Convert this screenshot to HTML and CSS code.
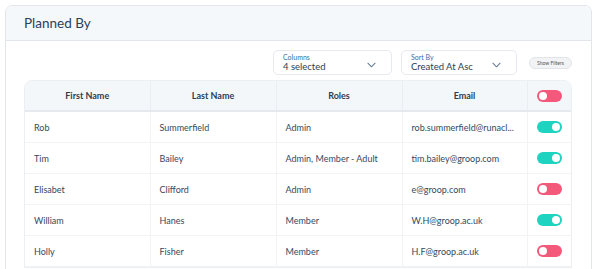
FILE: index.html
```html
<!DOCTYPE html>
<html lang="en">
<head>
    <meta charset="UTF-8">
    <meta name="viewport" content="width=device-width, initial-scale=1.0">
    <title>Planned By</title>
    <link rel="stylesheet" href="styles.css">
</head>
<body>
    <div class="card">
        <div class="card-header">
            <h2>Planned By</h2>
        </div>

        <div class="card-body">
            <div class="toolbar">
                <div class="dropdown dd-columns">
                    <span class="dd-label">Columns</span>
                    <span class="dd-value">4 selected</span>
                    <svg class="chevron" viewBox="0 0 10 6" width="9" height="6"><path d="M1 1l4 4 4-4" fill="none" stroke="#6a7f95" stroke-width="1.2" stroke-linecap="round" stroke-linejoin="round"/></svg>
                </div>
                <div class="dropdown dd-sort">
                    <span class="dd-label">Sort By</span>
                    <span class="dd-value">Created At Asc</span>
                    <svg class="chevron" viewBox="0 0 10 6" width="9" height="6"><path d="M1 1l4 4 4-4" fill="none" stroke="#6a7f95" stroke-width="1.2" stroke-linecap="round" stroke-linejoin="round"/></svg>
                </div>
                <button class="pill">Show Filters</button>
            </div>

            <div class="table-wrap">
                <table>
                    <colgroup>
                        <col class="w-first">
                        <col class="w-mid">
                        <col class="w-mid">
                        <col class="w-first">
                        <col>
                    </colgroup>
                    <thead>
                        <tr>
                            <th>First Name</th>
                            <th>Last Name</th>
                            <th>Roles</th>
                            <th>Email</th>
                            <th class="col-toggle"><span class="toggle off"></span></th>
                        </tr>
                    </thead>
                    <tbody>
                        <tr>
                            <td>Rob</td>
                            <td>Summerfield</td>
                            <td>Admin</td>
                            <td>rob.summerfield@runacl...</td>
                            <td class="cell-toggle"><span class="toggle on"></span></td>
                        </tr>
                        <tr>
                            <td>Tim</td>
                            <td>Bailey</td>
                            <td>Admin, Member - Adult</td>
                            <td>tim.bailey@groop.com</td>
                            <td class="cell-toggle"><span class="toggle on"></span></td>
                        </tr>
                        <tr>
                            <td>Elisabet</td>
                            <td>Clifford</td>
                            <td>Admin</td>
                            <td>e@groop.com</td>
                            <td class="cell-toggle"><span class="toggle off"></span></td>
                        </tr>
                        <tr>
                            <td>William</td>
                            <td>Hanes</td>
                            <td>Member</td>
                            <td>W.H@groop.ac.uk</td>
                            <td class="cell-toggle"><span class="toggle on"></span></td>
                        </tr>
                        <tr>
                            <td>Holly</td>
                            <td>Fisher</td>
                            <td>Member</td>
                            <td>H.F@groop.ac.uk</td>
                            <td class="cell-toggle"><span class="toggle off"></span></td>
                        </tr>
                    </tbody>
                </table>
            </div>
        </div>
    </div>
</body>
</html>
```

FILE: styles.css
```css
body {
    margin: 0;
    padding: 5px 8px 0 5px;
    font-family: Lato, "Open Sans", sans-serif;
    color: #2c3e50;
    background: #fff;
}
.card {
    width: 585px;
    border: 1px solid #e2e6eb;
    border-radius: 7px;
    height: 300px;
    overflow: hidden;
}
.card-header {
    height: 34px;
    background-color: #f5f8fb;
    border-bottom: 1px solid #e2e6eb;
    display: flex;
    align-items: center;
    padding-left: 18px;
}
.card-header h2 {
    margin: 0;
    font-size: 13.5px;
    font-weight: normal;
    color: #2a4158;
}
.card-body {
    padding: 9px 19px 0 18px;
}
.toolbar {
    display: flex;
    justify-content: flex-end;
    align-items: center;
    height: 25px;
    margin-bottom: 5px;
}
.dropdown {
    position: relative;
    box-sizing: border-box;
    height: 25px;
    border: 1px solid #e6e9ee;
    border-radius: 5px;
    padding: 2px 9px 0 9px;
    display: flex;
    flex-direction: column;
}
.dd-columns {
    width: 119px;
    margin-right: 9px;
}
.dd-sort {
    width: 116px;
    margin-right: 12px;
}
.dd-label {
    font-size: 7px;
    line-height: 8px;
    color: #3b6ea5;
}
.dd-value {
    font-size: 9.5px;
    line-height: 12px;
    color: #2c3e50;
}
.chevron {
    position: absolute;
    right: 15px;
    top: 11px;
}
.pill {
    width: 43px;
    height: 12px;
    padding: 0;
    border: 1px solid #e1e4e8;
    border-radius: 6px;
    background: #f2f3f5;
    font-family: Lato, sans-serif;
    font-size: 5px;
    color: #555;
}
.table-wrap {
    border: 1px solid #eceff2;
    border-radius: 8px 8px 0 0;
    overflow: hidden;
}
table {
    width: 100%;
    border-collapse: collapse;
    table-layout: fixed;
    font-size: 9px;
}
.w-first { width: 125px; }
.w-mid { width: 126px; }
th {
    height: 29px;
    padding: 0;
    background-color: #f4f7fa;
    font-weight: bold;
    text-align: center;
    border-bottom: 2px solid #e6eaef;
    border-right: 1px solid #eaedf1;
    color: #2c3e50;
}
th:last-child, td:last-child {
    border-right: none;
}
td {
    height: 30px;
    padding: 0 0 0 9px;
    border-bottom: 1px solid #f1f3f5;
    border-right: 1px solid #f1f3f5;
    white-space: nowrap;
    overflow: hidden;
    color: #34495e;
}
.cell-toggle, th.col-toggle {
    padding: 0;
    text-align: center;
}
.toggle {
    display: inline-block;
    position: relative;
    width: 25px;
    height: 12px;
    border-radius: 6px;
    vertical-align: middle;
}
.toggle::after {
    content: "";
    position: absolute;
    top: 2px;
    width: 8px;
    height: 8px;
    border-radius: 50%;
    background: #fff;
}
.toggle.on {
    background-color: #1ed3bf;
}
.toggle.on::after {
    right: 2px;
}
.toggle.off {
    background-color: #f4587b;
}
.toggle.off::after {
    left: 2px;
}
```
